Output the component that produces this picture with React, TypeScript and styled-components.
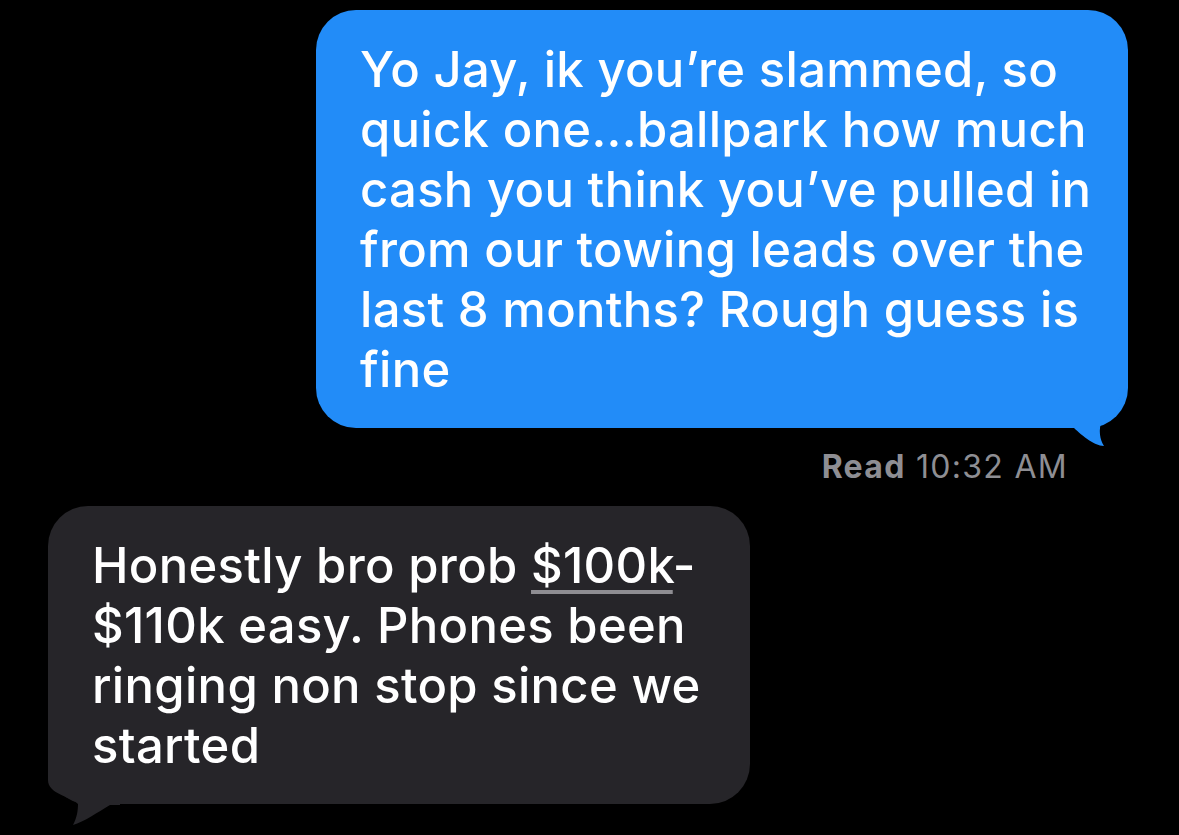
import React from 'react';
import styled, {createGlobalStyle} from "styled-components";

const GlobalStyle = createGlobalStyle`
  html, body {
    margin: 0;
    padding: 0;
    background: #000;
  }
  body {
    font-family: Inter, "Liberation Sans", Arial, sans-serif;
    -webkit-font-smoothing: antialiased;
  }
`

const colors = {
    blue: "#228cf8",
    gray: "#262529",
    meta: "#8e8e93",
}

const sentLines = [
    "Yo Jay, ik you\u2019re slammed, so",
    "quick one...ballpark how much",
    "cash you think you\u2019ve pulled in",
    "from our towing leads over the",
    "last 8 months? Rough guess is",
    "fine",
]

export default function App() {
    return (
        <>
            <GlobalStyle/>
            <Thread>
                <Bubble side="right">
                    <Tail side="right" viewBox="0 0 70 80" width="70" height="80">
                        <path
                            d="M0 0 L68 0 L68 12 C68 30 50 40 44 52 C40 62 42 72 46 78 C36 78 22 66 14 58 L0 58 Z"
                            fill={colors.blue}
                        />
                    </Tail>
                    {sentLines.map((line, index) => (
                        <Line key={index}>{line}</Line>
                    ))}
                </Bubble>

                <Receipt>
                    <b>Read</b> 10:32 AM
                </Receipt>

                <Bubble side="left">
                    <Tail side="left" viewBox="0 0 80 70" width="80" height="70">
                        <path
                            d="M8 0 L80 0 L80 45 L70 45 C58 52 44 62 33 65 C37 58 38 50 38 44 C30 36 8 34 8 20 Z"
                            fill={colors.gray}
                        />
                    </Tail>
                    <Line>Honestly bro prob <Money>$100k</Money>-</Line>
                    <Line>$110k easy. Phones been</Line>
                    <Line>ringing non stop since we</Line>
                    <Line>started</Line>
                </Bubble>
            </Thread>
        </>
    );
}

const Thread = styled.main`
  display: flex;
  flex-direction: column;
  width: 1179px;
  height: 835px;
  box-sizing: border-box;
  padding-top: 10px;
  overflow: hidden;
`

const Bubble = styled.div<{side: "left" | "right"}>`
  position: relative;
  box-sizing: border-box;
  align-self: ${props => props.side === "right" ? "flex-end" : "flex-start"};
  margin: ${props => props.side === "right" ? "0 51px 0 0" : "0 0 0 48px"};
  width: ${props => props.side === "right" ? "812px" : "702px"};
  padding: 30px 20px 28px 44px;
  border-radius: 40px;
  background: ${props => props.side === "right" ? colors.blue : colors.gray};
  color: #fff;
  font-size: 49px;
  line-height: 60px;
  font-weight: 500;
  letter-spacing: 0.3px;
`

const Line = styled.div`
  position: relative;
  white-space: nowrap;
`

const Money = styled.span`
  text-decoration: underline;
  text-decoration-color: #8e8d92;
  text-decoration-thickness: 4px;
  text-underline-offset: 7px;
`

const Tail = styled.svg<{side: "left" | "right"}>`
  position: absolute;
  display: block;
  ${props => props.side === "right"
    ? "right: 0; bottom: -20px;"
    : "left: -8px; bottom: -26px;"}
`

const Receipt = styled.div`
  align-self: flex-end;
  margin: 20px 111px 21px 0;
  color: ${colors.meta};
  font-size: 32px;
  line-height: 37px;
  font-weight: 400;
  letter-spacing: 1.3px;

  b {
    font-weight: 700;
  }
`
